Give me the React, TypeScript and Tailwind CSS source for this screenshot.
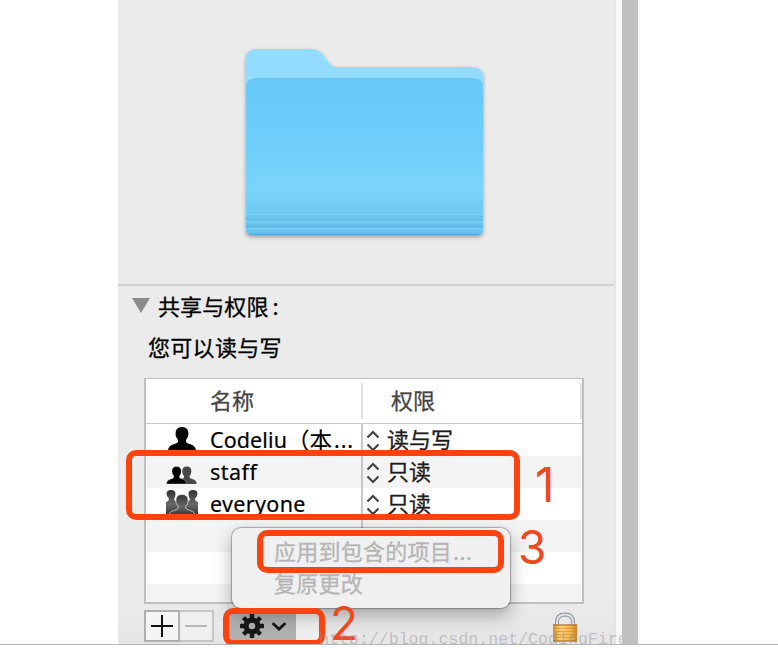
import React from "react";

const FONT = "font-['Noto_Sans','Noto_Sans_CJK_SC',sans-serif]";
const CJK = "font-['Noto_Sans_CJK_SC',sans-serif] [-webkit-text-stroke:0.3px]";

function Folder() {
  return (
    <svg width="270" height="220" viewBox="0 0 270 220" className="block">
      <defs>
        <linearGradient id="front" x1="0" y1="0" x2="0" y2="1">
          <stop offset="0" stopColor="#67c8f9" />
          <stop offset="0.35" stopColor="#6dcdfa" />
          <stop offset="0.72" stopColor="#7bd4fc" />
          <stop offset="0.87" stopColor="#70c9f2" />
          <stop offset="1" stopColor="#70c8f2" />
        </linearGradient>
        <linearGradient id="fold" x1="0" y1="0" x2="0" y2="1">
          <stop offset="0" stopColor="#74cbf4" />
          <stop offset="1" stopColor="#5fbae8" />
        </linearGradient>
        <clipPath id="frontClip">
          <path d="M16 58Q16 48 26 48H243Q253 48 253 58V199Q253 205 247 205H22Q16 205 16 199Z" />
        </clipPath>
        <filter id="soft" x="-10%" y="-10%" width="120%" height="120%">
          <feDropShadow dx="0" dy="2" stdDeviation="2" floodColor="#000" floodOpacity="0.35" />
        </filter>
      </defs>
      <g filter="url(#soft)">
        <path d="M16 29Q16 19 26 19H82Q89 19 93 25L99 33Q102 37 108 37H243Q253 37 253 47V199Q253 205 247 205H22Q16 205 16 199Z" fill="#94dcff" />
      </g>
      <g clipPath="url(#frontClip)">
        <rect x="16" y="48" width="237" height="157" fill="url(#front)" />
        <rect x="16" y="184" width="237" height="7" fill="url(#fold)" />
        <rect x="16" y="191" width="237" height="7" fill="url(#fold)" />
        <rect x="16" y="198" width="237" height="7" fill="url(#fold)" />
        <path d="M16 184.5H253M16 191.5H253M16 198.5H253" stroke="#7fd2f7" />
        <path d="M16 204.5H253" stroke="#55a9d4" />
      </g>
    </svg>
  );
}

const BUST = "M0 24Q0 19 5 17.500L9 16Q10.500 15 10 13Q7.500 10 7.500 7Q7.500 0 14 0Q20.500 0 20.500 7Q20.500 10 18 13Q17.500 15 19 16L23 17.500Q28 19 28 24Z";

function OneUser() {
  return (
    <svg width="34" height="32" viewBox="0 0 34 32">
      <path d={BUST} transform="translate(3 3)" fill="#000" />
    </svg>
  );
}

function TwoUsers() {
  return (
    <svg width="34" height="32" viewBox="0 0 34 32">
      <path d={BUST} transform="translate(12 10.500) scale(.7 .73)" fill="#484848" />
      <path d={BUST} transform="translate(1.500 10.500) scale(.72 .73)" fill="#000" stroke="#f4f4f4" strokeWidth=".5" />
    </svg>
  );
}

function ThreeUsers() {
  return (
    <svg width="34" height="32" viewBox="0 0 34 32">
      <defs>
        <linearGradient id="crowd" x1="0" y1="0" x2="0" y2="1">
          <stop offset="0" stopColor="#333" />
          <stop offset=".55" stopColor="#686868" />
          <stop offset="1" stopColor="#303030" />
        </linearGradient>
      </defs>
      <path d="M1 28V14Q5 13 3.500 10Q1.500 8 1.500 5.500Q1.500 2 6 2Q10.500 2 10.500 6Q10.500 9 9 11Q9 13 14 15V28Z" fill="url(#crowd)" />
      <path d="M33 28V14Q29 13 30.500 10Q32.500 8 32.500 5.500Q32.500 2 28 2Q23.500 2 23.500 6Q23.500 9 25 11Q25 13 20 15V28Z" fill="url(#crowd)" />
      <path d={BUST} transform="translate(3.700 6.500) scale(.95 .92)" fill="url(#crowd)" stroke="#ddd" strokeWidth=".8" />
    </svg>
  );
}

function Stepper() {
  return (
    <svg width="14" height="32" viewBox="0 0 14 32" fill="none" stroke="#444" strokeWidth="2.200">
      <path d="M1.500 13.500L7 8L12.500 13.500M1.500 20.500L7 26L12.500 20.500" />
    </svg>
  );
}

function Gear() {
  return (
    <svg width="24" height="24" viewBox="-12 -12 24 24" fill="#181818">
      {[0, 45, 90, 135].map((a) => (
        <rect key={a} x="-2.200" y="-12" width="4.400" height="24" rx=".6" transform={`rotate(${a})`} />
      ))}
      <circle r="8.500" />
      <circle r="3.300" fill="#b0b0b0" />
    </svg>
  );
}

function Lock() {
  return (
    <svg width="26" height="32" viewBox="0 0 26 32">
      <defs>
        <linearGradient id="brass" x1="0" y1="0" x2="1" y2="0">
          <stop offset="0" stopColor="#d99430" />
          <stop offset=".35" stopColor="#ffd179" />
          <stop offset=".75" stopColor="#f5b347" />
          <stop offset="1" stopColor="#c98330" />
        </linearGradient>
      </defs>
      <path d="M5 17V12Q5 4.500 13 4.500Q21 4.500 21 12V17" fill="none" stroke="#8a9096" strokeWidth="4" />
      <path d="M5 17V12Q5 4.500 13 4.500Q21 4.500 21 12V17" fill="none" stroke="#dfe5ea" strokeWidth="2" />
      <rect x="1" y="14.500" width="24" height="17" rx="1" fill="url(#brass)" />
      <path d="M1 15H25" stroke="#9b631f" />
      <path d="M1 18.500H25M1 21.500H25M1 24.500H25M1 27.500H25" stroke="#bd7924" strokeOpacity=".45" />
      <path d="M1 31H25" stroke="#94601e" />
    </svg>
  );
}

const rows = [
  {
    name: (
      <>
        <span className="tracking-[0.1px]">Codeliu</span>
        <span className="relative -top-px font-['Noto_Sans_CJK_SC',sans-serif] text-[22.5px]">（本</span>
        <span className="ml-[2px] tracking-[0.9px]">...</span>
      </>
    ),
    right: "读与写",
    icon: <OneUser />,
    spacing: "",
  },
  { name: "staff", right: "只读", icon: <TwoUsers />, spacing: "tracking-[0.5px]" },
  { name: "everyone", right: "只读", icon: <ThreeUsers />, spacing: "tracking-[0.35px]" },
  { name: "", right: "", icon: null, spacing: "" },
  { name: "", right: "", icon: null, spacing: "" },
  { name: "", right: "", icon: null, spacing: "" },
];

function PermissionTable() {
  return (
    <div className="ml-[26px] flex h-[226px] w-[440px] flex-col overflow-hidden border-2 border-t border-[#bfbfbf] bg-white">
      <div className={`flex h-[45px] shrink-0 items-center border-b border-[#c9c9c9] text-[22px] leading-[32px] text-[#444] ${CJK}`}>
        <div className="flex h-[36px] w-[217px] items-start border-r-2 border-[#e1e1e1] pl-[64px]">名称</div>
        <div className="flex h-[36px] flex-1 items-start border-r-2 border-[#e1e1e1] pl-[28px]">权限</div>
      </div>
      {rows.map((r, i) => (
        <div key={i} className={`flex h-8 shrink-0 text-[22px] leading-8 text-black ${i % 2 ? "bg-[#f4f4f4]" : "bg-white"}`}>
          <div className="flex w-[217px] shrink-0 border-r-2 border-[#c8c8c8] pl-[19px]">
            <div className="w-[45px] shrink-0">{r.icon}</div>
            <div className={`flex whitespace-nowrap text-[21.5px] [-webkit-text-stroke:0.2px] ${r.spacing}`}>{r.name}</div>
          </div>
          {r.right && (
            <div className="flex pl-[3px] text-[#1c1c1c]">
              <Stepper />
              <span className={`pl-[7px] leading-[29px] ${CJK}`}>{r.right}</span>
            </div>
          )}
        </div>
      ))}
    </div>
  );
}

function Toolbar() {
  return (
    <div className="mt-[6px] flex h-[32px] pl-[26px]">
      <div className="flex w-[36px] items-center justify-center border-2 border-[#b0b0b0] bg-[#f5f5f5]">
        <svg width="24" height="24" viewBox="0 0 24 24" stroke="#111" strokeWidth="2"><path d="M1 12H23M12 1V23" /></svg>
      </div>
      <div className="flex w-[34px] items-center justify-center border-2 border-l-0 border-[#c6c6c6] bg-[#efefef]">
        <svg width="24" height="24" viewBox="0 0 24 24" stroke="#b8b8b8" strokeWidth="2"><path d="M1 12H23" /></svg>
      </div>
      <div className="ml-[15px] flex w-[67px] items-center bg-[#b0b0b0] pl-[11px]">
        <Gear />
        <svg className="ml-[7px]" width="16" height="12" viewBox="0 0 16 12" fill="none" stroke="#181818" strokeWidth="3"><path d="M2.500 4L8 9L13.500 4" strokeLinecap="round" /></svg>
      </div>
      <div className="w-[25px] bg-[#efefef]" />
      <div className="ml-[231px]"><Lock /></div>
    </div>
  );
}

export default function App() {
  return (
    <div className={`relative h-[648px] w-[778px] overflow-hidden bg-white ${FONT}`}>
      <div className="relative flex h-[644px] overflow-hidden pl-[118px]">
        <main className="w-[496px] shrink-0 bg-[linear-gradient(#ebebeb_0,#ebebeb_600px,#e5e5e5_644px)]">
          <div className="h-[286px] border-b-2 border-[#d2d2d2] pl-[112px] pt-[30px]">
            <Folder />
          </div>
          <div className="flex h-[38px] items-center pl-[14px] text-[22px] text-black">
            <svg width="18" height="15" viewBox="0 0 18 15"><path d="M0 0H18L9 15Z" fill="#8b8b8b" /></svg>
            <span className={`pl-[8px] tracking-[0.1px] ${CJK}`}>共享与权限<span className="ml-[4px]">:</span></span>
          </div>
          <div className={`h-[54px] pl-[30px] text-[22px] leading-[44px] tracking-[0.3px] text-black ${CJK}`}>您可以读与写</div>
          <PermissionTable />
          <Toolbar />
        </main>
        <div className="w-[2px] bg-[#e5e5e5]" />
        <div className="w-[6px] bg-[#f7f7f7]" />
        <div className="w-[16px] bg-[#c0c0c0]" />
        <div className="w-[2px] bg-[#f7f7f7]" />

        <div className="absolute left-[232px] top-[528px] h-[80px] w-[278px] rounded-[9px] bg-[#f0f0f0] pl-[42px] pt-[6px] text-[22px] leading-[32px] tracking-[0.25px] text-[#b5b5b5] shadow-[0_0_1px_1px_rgba(0,0,0,0.28),0_7px_18px_rgba(0,0,0,0.32)]">
          <div className={CJK}>应用到包含的项目<span className="ml-px">...</span></div>
          <div className={CJK}>复原更改</div>
        </div>

        <div className="absolute left-[126px] top-[450px] h-[70px] w-[394px] rounded-[10px] border-6 border-[#fc430f]" />
        <div className="absolute left-[257px] top-[530px] h-[43px] w-[247px] rounded-[10px] border-6 border-[#fc430f]" />
        <div className="absolute left-[223px] top-[608px] h-[38px] w-[102px] rounded-[10px] border-6 border-[#fc430f]" />
        <span className="absolute left-[535px] top-[461px] font-['Inter',sans-serif] text-[48px] leading-[48px] text-[#ee481f]">1</span>
        <span className="absolute left-[518px] top-[523px] font-['Inter',sans-serif] text-[46px] leading-[48px] text-[#ee481f]">3</span>
        <span className="absolute left-[330px] top-[599px] font-['Inter',sans-serif] text-[46px] leading-[48px] text-[#ee481f]">2</span>
        <span className="absolute left-[319px] top-[628px] w-[303px] overflow-hidden whitespace-nowrap font-['Liberation_Mono',monospace] text-[16.6px] leading-[24px] text-[#8d8d8d]/45">http://blog.csdn.net/CodingFire</span>
      </div>
      <div className="h-px bg-[#b5b5b5]" />
    </div>
  );
}
